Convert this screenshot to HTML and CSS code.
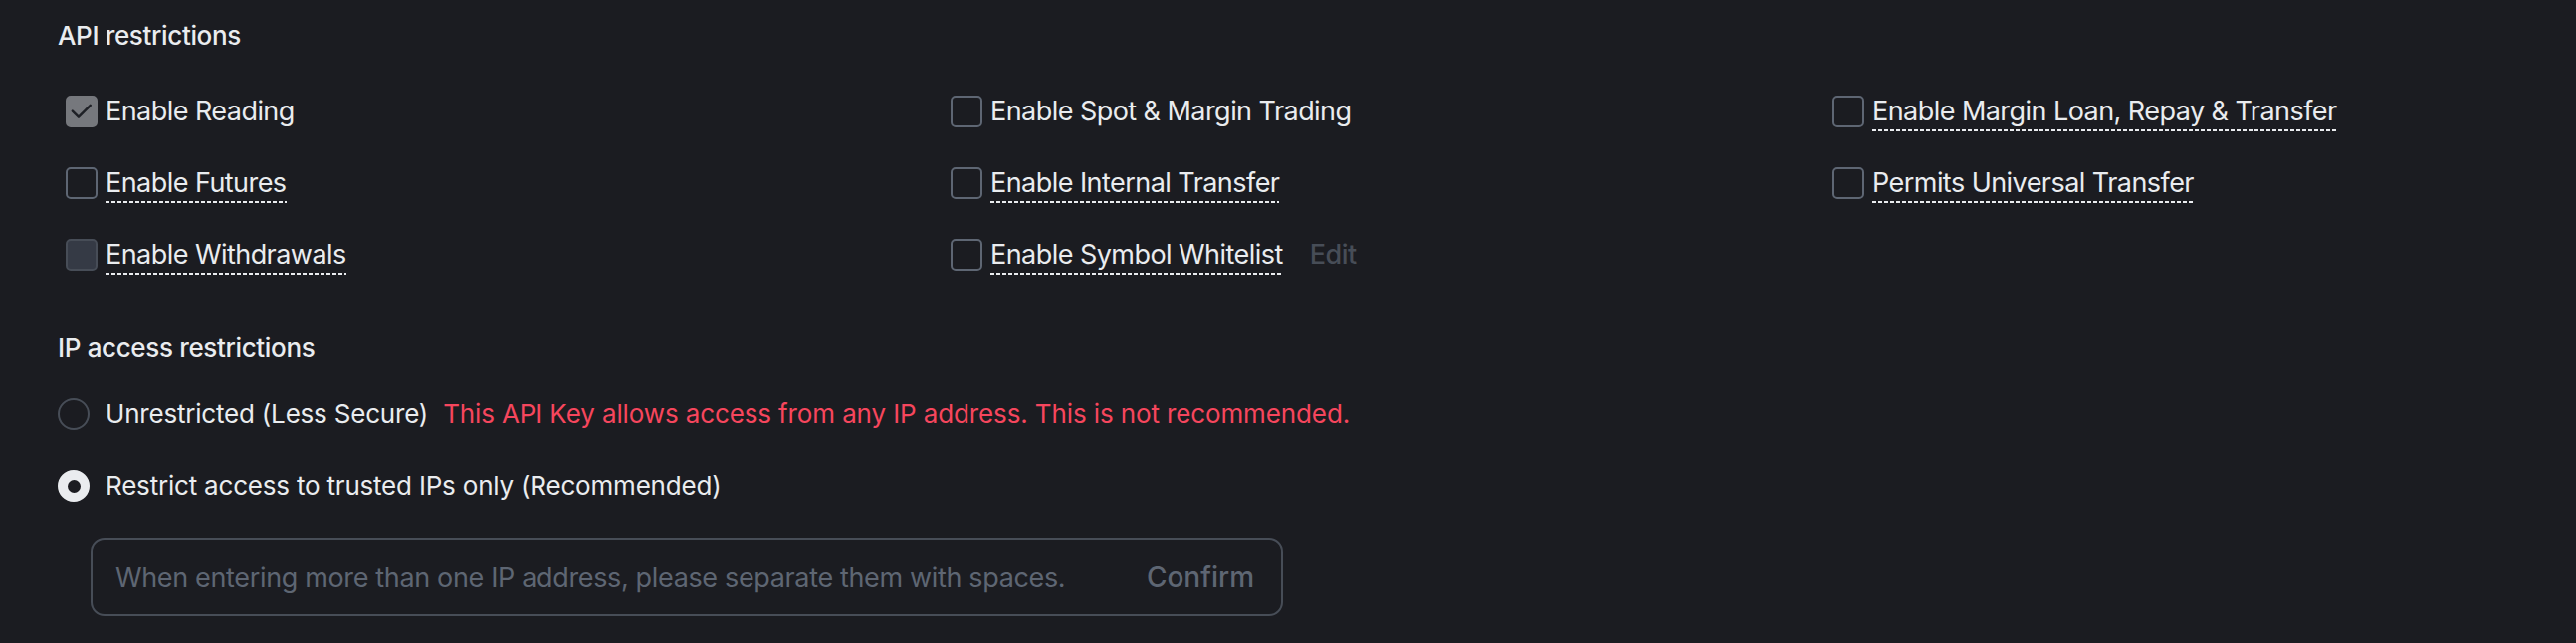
FILE: index.html
```html
<!DOCTYPE html>
<html lang="en">
<head>
<meta charset="utf-8">
<title>API restrictions</title>
<link rel="stylesheet" href="styles.css">
</head>
<body>
<main class="page">
  <section class="group">
    <h3 class="title">API restrictions</h3>
    <div class="perm-grid">
      <label class="perm">
        <span class="box box-checked">
          <svg viewBox="0 0 32 32" width="32" height="32"><path d="M5.5 15.5 L12.5 22.5 L26 9" fill="none" stroke="#1e2026" stroke-width="2.8" stroke-linecap="round" stroke-linejoin="round"/></svg>
        </span>
        <span class="text">Enable Reading</span>
      </label>
      <label class="perm">
        <span class="box"></span>
        <span class="text">Enable Spot &amp; Margin Trading</span>
      </label>
      <label class="perm">
        <span class="box"></span>
        <span class="text dashed">Enable Margin Loan, Repay &amp; Transfer</span>
      </label>
      <label class="perm">
        <span class="box"></span>
        <span class="text dashed">Enable Futures</span>
      </label>
      <label class="perm">
        <span class="box"></span>
        <span class="text dashed">Enable Internal Transfer</span>
      </label>
      <label class="perm">
        <span class="box"></span>
        <span class="text dashed">Permits Universal Transfer</span>
      </label>
      <label class="perm">
        <span class="box box-disabled"></span>
        <span class="text dashed">Enable Withdrawals</span>
      </label>
      <label class="perm">
        <span class="box"></span>
        <span class="text dashed">Enable Symbol Whitelist</span>
        <span class="edit">Edit</span>
      </label>
    </div>
  </section>

  <section class="group group-ip">
    <h3 class="title">IP access restrictions</h3>
    <div class="radio-row">
      <span class="radio"></span>
      <span class="radio-text">Unrestricted (Less Secure)</span>
      <span class="warn">This API Key allows access from any IP address. This is not recommended.</span>
    </div>
    <div class="radio-row">
      <span class="radio radio-on"></span>
      <span class="radio-text">Restrict access to trusted IPs only (Recommended)</span>
    </div>
    <div class="ip-box">
      <input class="ip-input" type="text" placeholder="When entering more than one IP address, please separate them with spaces.">
      <span class="confirm">Confirm</span>
    </div>
  </section>
</main>
</body>
</html>
```

FILE: styles.css
```css
* { box-sizing: border-box; }

html, body {
  margin: 0;
  background: #1b1c21;
}

body {
  font-family: Inter, "Noto Sans", sans-serif;
  color: #eaecef;
  font-size: 27px;
}

.page {
  padding: 18px 0 0 58px;
}

.title {
  margin: 0;
  font-size: 26px;
  line-height: 36px;
  font-weight: 500;
  letter-spacing: -0.35px;
  color: #eaecef;
}

.perm-grid {
  margin: 42px 0 0 8px;
  display: grid;
  grid-template-columns: 889px 886px auto;
  row-gap: 40px;
}

.perm {
  display: flex;
  align-items: flex-start;
  height: 32px;
  gap: 8px;
}

.box {
  flex: 0 0 32px;
  width: 32px;
  height: 32px;
  border: 2px solid #5e6673;
  border-radius: 5px;
  display: flex;
  align-items: center;
  justify-content: center;
}

.box svg { display: block; }

.box-checked {
  background: #76787d;
  border-color: #76787d;
}

.box-disabled {
  background: #353a45;
  border-color: #474d57;
}

.text {
  line-height: 32px;
  white-space: nowrap;
  letter-spacing: -0.55px;
}

.dashed {
  padding-bottom: 4px;
  background-image: linear-gradient(to right, #eaecef 0 4px, transparent 4px 6px);
  background-size: 6px 2px;
  background-repeat: repeat-x;
  background-position: 0 100%;
}

.edit {
  margin-left: 19px;
  line-height: 32px;
  color: #474d57;
  font-weight: 500;
  letter-spacing: -0.5px;
}

.group-ip {
  margin-top: 60px;
}

.radio-row {
  display: flex;
  align-items: center;
  height: 32px;
  margin-top: 32px;
  font-size: 26px;
}

.radio-row + .radio-row {
  margin-top: 40px;
}

.radio {
  flex: 0 0 32px;
  width: 32px;
  height: 32px;
  border-radius: 50%;
  border: 2px solid #474d57;
  margin-right: 16px;
  position: relative;
}

.radio-on {
  background: #eaecef;
  border-color: #eaecef;
}

.radio-on::after {
  content: "";
  position: absolute;
  left: 50%;
  top: 50%;
  width: 13px;
  height: 13px;
  margin: -6.5px 0 0 -6.5px;
  border-radius: 50%;
  background: #1b1c21;
}

.radio-text {
  line-height: 32px;
  white-space: nowrap;
  letter-spacing: -0.2px;
}

.warn {
  margin-left: 15px;
  color: #f6465d;
  line-height: 32px;
  white-space: nowrap;
  letter-spacing: -0.12px;
}

.ip-box {
  margin: 37px 0 0 33px;
  width: 1198px;
  height: 78px;
  border: 2px solid #474d57;
  border-radius: 14px;
  display: flex;
  align-items: center;
  padding: 0 27px 0 23px;
}

.ip-input {
  flex: 1;
  min-width: 0;
  background: transparent;
  border: 0;
  outline: none;
  padding: 0;
  font-family: inherit;
  font-size: 27px;
  letter-spacing: -0.35px;
  color: #eaecef;
}

.ip-input::placeholder {
  color: #5e6673;
}

.confirm {
  font-size: 28px;
  font-weight: 500;
  color: #5e6673;
}
```
